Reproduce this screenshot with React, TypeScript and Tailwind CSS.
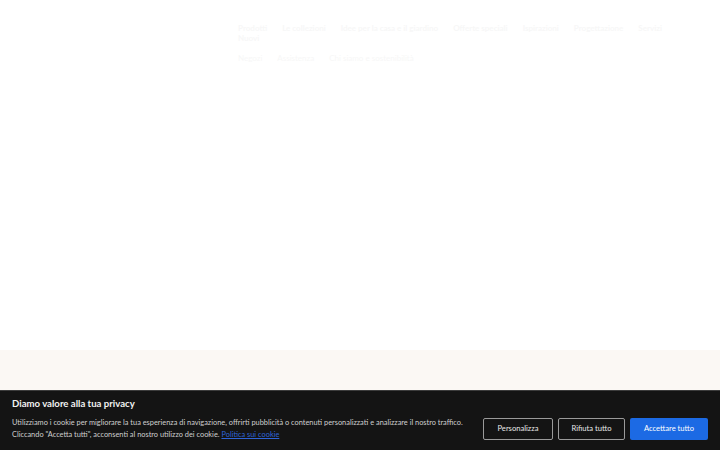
import React from 'react';

const topNav = [
  { label: 'Prodotti', sub: 'Nuovi' },
  { label: 'Le collezioni' },
  { label: 'Idee per la casa e il giardino' },
  { label: 'Offerte speciali' },
  { label: 'Ispirazioni' },
  { label: 'Progettazione' },
  { label: 'Servizi' },
];

const secondNav = ['Negozi', 'Assistenza', 'Chi siamo e sostenibilità'];

export default function App() {
  return (
    <div
      className="flex h-[450px] w-[720px] flex-col overflow-hidden bg-white"
      style={{ fontFamily: 'Lato, "Noto Sans", sans-serif' }}
    >
      <header className="flex-1 bg-white pl-[238px] pr-[36px] pt-[24px]">
        <nav className="flex items-start gap-x-[15px] text-[8px] font-bold text-[#f7f7f7]">
          {topNav.map((item) => (
            <div key={item.label} className="flex flex-col leading-[9px]">
              <span className="whitespace-nowrap">{item.label}</span>
              {item.sub && <span className="mt-[1px] whitespace-nowrap">{item.sub}</span>}
            </div>
          ))}
        </nav>
        <nav className="mt-[9px] flex gap-x-[15px] text-[8px] text-[#f7f7f7]">
          {secondNav.map((s) => (
            <span key={s} className="whitespace-nowrap">{s}</span>
          ))}
        </nav>
      </header>

      <div className="h-[40px] bg-[#fbf8f4]" />

      <section className="flex h-[60px] items-end justify-between border-t border-[#3c3c3c] bg-[#141414] px-[12px] pb-[9px]">
        <div className="flex flex-col">
          <h2 className="mb-[7px] text-[9.6px] font-bold leading-[12px] text-[#f2f2f2]">
            Diamo valore alla tua privacy
          </h2>
          <p className="text-[7.4px] leading-[12px] text-[#cfcfcf]">
            Utilizziamo i cookie per migliorare la tua esperienza di navigazione, offrirti pubblicità o contenuti personalizzati e analizzare il nostro traffico.
            <br />
            Cliccando "Accetta tutti", acconsenti al nostro utilizzo dei cookie.{' '}
            <a href="#" className="text-[#2f64d8] underline">
              Politica sui cookie
            </a>
          </p>
        </div>
        <div className="mb-[1px] flex gap-[5px] text-[7.6px] text-[#e8e8e8]">
          <button className="h-[22px] w-[70px] rounded-[2px] border border-[#9a9a9a] bg-[#141414]">
            Personalizza
          </button>
          <button className="h-[22px] w-[67px] rounded-[2px] border border-[#9a9a9a] bg-[#141414]">
            Rifiuta tutto
          </button>
          <button className="h-[22px] w-[78px] rounded-[2px] bg-[#1c6ae4] text-white">
            Accettare tutto
          </button>
        </div>
      </section>
    </div>
  );
}
